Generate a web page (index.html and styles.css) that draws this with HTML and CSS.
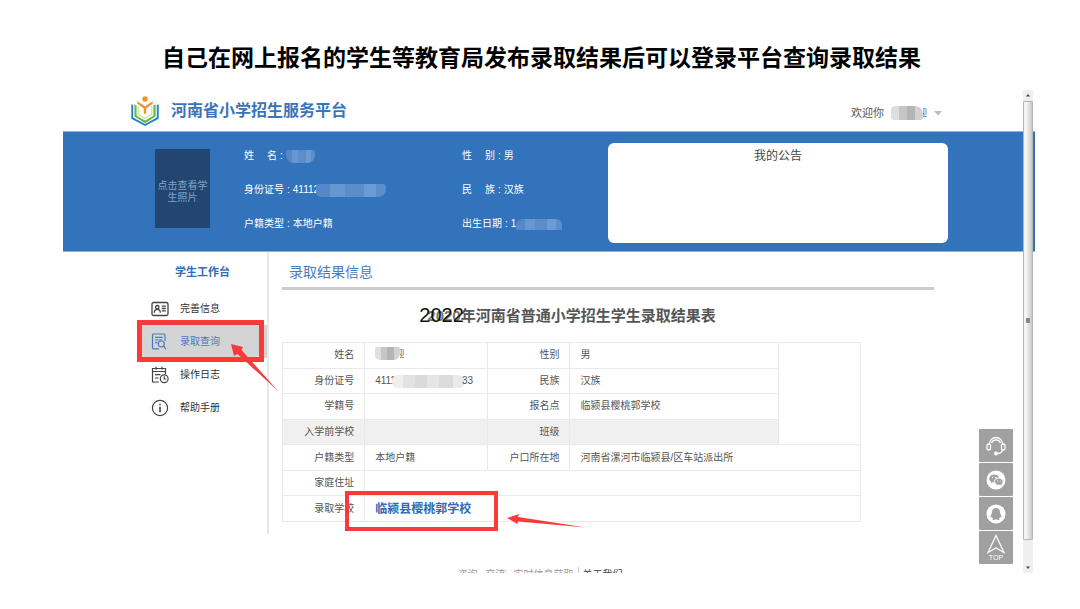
FILE: index.html
```html
<!DOCTYPE html>
<html lang="zh-CN">
<head>
<meta charset="utf-8">
<title>河南省小学招生服务平台</title>
<meta name="viewport" content="width=device-width, initial-scale=1">
<link rel="stylesheet" href="styles.css">
</head>
<body>
<h1 class="headline">自己在网上报名的学生等教育局发布录取结果后可以登录平台查询录取结果</h1>
<div class="window">
  <header class="topbar">
    <svg class="logo" viewBox="0 0 28 30" aria-hidden="true">
      <circle cx="14" cy="3" r="2.700" fill="#ee9233"/>
      <path d="M6.300 5.200 14 10.200l7.700-5v2.600L15.200 12.500v5.300h-2.400v-5.300L6.300 7.800z" fill="#ee9233"/>
      <path d="M3.400 8.200 5.600 9.400v10.300L14 24.600l8.400-4.900V9.400l2.200-1.200v12.300L14 27.300 3.400 20.500z" fill="#6db544"/>
      <path d="M7.200 9.800v8.400L14 22.300l6.800-4.100V9.800" fill="none" stroke="#a9cf5a" stroke-width=".800"/>
      <path d="M.300 8.200 2.200 9v12.600L14 28l11.800-6.400V9l1.900-.800v14.500L14 30 .300 22.700z" fill="#1f86c2"/>
    </svg>
    <strong class="brand">河南省小学招生服务平台</strong>
    <button class="user" type="button">欢迎你
      <span class="masked"><span class="mosaic mosaic-grey mosaic-user"></span><span class="tail">迎</span></span>
      <svg class="caret" viewBox="0 0 8 5" aria-hidden="true"><path d="M0 0h8L4 4.500z" fill="#bdbdbd"/></svg>
    </button>
  </header>

  <section class="band">
    <button class="photo" type="button">点击查看学生照片</button>
    <dl class="profile">
      <div><dt class="pair"><span>姓</span><span>名</span></dt><dd><span class="mosaic mosaic-blue mosaic-name"></span></dd></div>
      <div><dt class="pair"><span>性</span><span>别</span></dt><dd>男</dd></div>
      <div><dt>身份证号</dt><dd>41112<span class="mosaic mosaic-blue mosaic-id"></span></dd></div>
      <div><dt class="pair"><span>民</span><span>族</span></dt><dd>汉族</dd></div>
      <div><dt>户籍类型</dt><dd>本地户籍</dd></div>
      <div><dt>出生日期</dt><dd>1<span class="mosaic mosaic-blue mosaic-birth"></span></dd></div>
    </dl>
    <div class="notice"><h2>我的公告</h2></div>
  </section>

  <div class="body">
    <nav class="sidebar">
      <h2>学生工作台</h2>
      <a class="item" href="#">
        <svg viewBox="0 0 18 18" fill="none" stroke="#444" stroke-width="1.300"><rect x="1" y="2.500" width="16" height="13" rx="1.500"/><circle cx="6.300" cy="7.200" r="1.700"/><path d="M3.300 12.700c0-4.500 6-4.500 6 0M10.800 6.200h4M10.800 8.500h4M10.800 10.800h4"/></svg>
        <span>完善信息</span></a>
      <a class="item active" href="#">
        <svg viewBox="0 0 18 18" fill="none" stroke="#4a7bbd" stroke-width="1.200"><path d="M8 15.800H2.500a1 1 0 0 1-1-1V2a1 1 0 0 1 1-1h10.500a1 1 0 0 1 1 1v6M4 4.300h7.500M4 7h7.500M4 9.700h2.500"/><circle cx="10.300" cy="11" r="3"/><path d="m12.500 13.200 2.500 3"/></svg>
        <span>录取查询</span></a>
      <a class="item" href="#">
        <svg viewBox="0 0 18 18" fill="none" stroke="#444" stroke-width="1.200"><path d="M8 16H1.500V2.500h13V8M1.500 5.500h13M5 .800v3M11 .800v3M4 8.700h5.500M4 12h3.500"/><circle cx="13.200" cy="12.700" r="3.900"/><path d="M13.200 10.300v2.700h2"/></svg>
        <span>操作日志</span></a>
      <a class="item" href="#">
        <svg viewBox="0 0 18 18" fill="none" stroke="#444" stroke-width="1.200"><circle cx="9" cy="9" r="7.600"/><path d="M9 7.700v5.600M9 4.700v1.600" stroke-width="1.600"/></svg>
        <span>帮助手册</span></a>
      <span class="mark mark-menu"></span>
      <svg class="arrow arrow-menu" viewBox="0 0 48 50" aria-hidden="true"><path d="M0 1 12 4 10.500 7 47 48 6.500 11 3 13z" fill="#fa3a3a"/></svg>
    </nav>

    <main class="main">
      <h2 class="section-title">录取结果信息</h2>
      <div class="sheet">
        <h3 class="sheet-title"><span class="year">2020<span class="year-over">2022</span></span>年河南省普通小学招生学生录取结果表</h3>
        <table class="result">
          <colgroup><col class="c-label"><col class="c-value"><col class="c-label"><col class="c-wide"><col class="c-label"></colgroup>
          <tbody>
          <tr><th scope="row">姓名</th><td><span class="masked"><span class="mosaic mosaic-grey mosaic-cell"></span><span class="tail">迎</span></span></td><th scope="row">性别</th><td>男</td><td rowspan="4"></td></tr>
          <tr><th scope="row">身份证号</th><td>4111<span class="mosaic mosaic-pale mosaic-number"></span>33</td><th scope="row">民族</th><td>汉族</td></tr>
          <tr><th scope="row">学籍号</th><td></td><th scope="row">报名点</th><td>临颍县樱桃郭学校</td></tr>
          <tr class="shade"><th scope="row">入学前学校</th><td></td><th scope="row">班级</th><td></td></tr>
          <tr><th scope="row">户籍类型</th><td>本地户籍</td><th scope="row">户口所在地</th><td colspan="2">河南省漯河市临颍县/区车站派出所</td></tr>
          <tr><th scope="row">家庭住址</th><td colspan="4"></td></tr>
          <tr><th scope="row">录取学校</th><td colspan="4" class="school">临颍县樱桃郭学校</td></tr>
          </tbody>
        </table>
        <span class="mark mark-school"></span>
        <svg class="arrow arrow-school" viewBox="0 0 80 14" aria-hidden="true"><path d="M0 4 12 0 11 3 79 13.500 11 7.500 10.500 10z" fill="#fa3a3a"/></svg>
      </div>
    </main>
  </div>

  <footer class="foot"><span>咨询</span><span>交流</span><span>实时信息获取</span><a href="#">关于我们</a></footer>

  <div class="tools">
    <button type="button" aria-label="客服"><svg viewBox="0 0 20 20" fill="none" stroke="#fff" stroke-width="1.300"><path d="M3.500 8a6.500 6.500 0 0 1 13 0M5.500 7a4.800 4.800 0 0 1 9 0M16.500 13c0 3-2 4.500-5 4.500"/><rect x="1" y="8" width="3.500" height="6" rx="1.500"/><rect x="15.500" y="8" width="3.500" height="6" rx="1.500"/><circle cx="10" cy="17.500" r="1.300" fill="#fff"/></svg></button>
    <button type="button" aria-label="微信"><svg viewBox="0 0 20 20"><circle cx="10" cy="10" r="9.500" fill="#fff"/><path d="M8.200 4.500c-3 0-5 1.800-5 4 0 1.300.700 2.400 1.800 3.100l-.400 1.500 1.800-.900 1.800.200c-.300-3.300 2.200-5 4.900-4.900-.500-1.900-2.600-3-4.900-3z" fill="#a0a0a0"/><path d="M12.800 8.300c-2.300 0-4.100 1.500-4.100 3.400s1.800 3.400 4.100 3.400l1.300-.200 1.500.800-.300-1.300c1-.700 1.600-1.600 1.600-2.700 0-1.900-1.800-3.400-4.100-3.400z" fill="#a0a0a0" stroke="#fff" stroke-width=".5"/><g fill="#fff"><circle cx="6.500" cy="7.500" r=".7"/><circle cx="9.800" cy="7.500" r=".7"/><circle cx="11.500" cy="11" r=".6"/><circle cx="14.200" cy="11" r=".6"/></g></svg></button>
    <button type="button" aria-label="QQ"><svg viewBox="0 0 20 20"><circle cx="10" cy="10" r="9.500" fill="#fff"/><path d="M10 4c-2.600 0-4 1.900-4 4.200 0 .700 0 .900-.4 1.600-.700 1.200-1.200 2.600-1 3.700.300.500.900-.1 1.300-.700.200.900.600 1.500 1.100 2-.700.400-.8 1.200.4 1.200 1.100 0 2-.3 2.600-.7.600.4 1.500.7 2.600.7 1.200 0 1.100-.8.400-1.200.5-.5.900-1.100 1.100-2 .4.600 1 1.200 1.300.700.200-1.100-.3-2.500-1-3.700-.4-.7-.4-.9-.4-1.600C14 5.900 12.600 4 10 4z" fill="#a0a0a0"/></svg></button>
    <button type="button" class="to-top"><svg viewBox="0 0 20 20" fill="none" stroke="#fff" stroke-width="1.200"><path d="M10 1.500 18 18.500l-8-4.500-8 4.500z"/></svg><span>TOP</span></button>
  </div>

  <div class="scrollbar" aria-hidden="true">
    <svg viewBox="0 0 10 11"><path d="M3 6.500h4L5 4z" fill="#444"/></svg>
    <span class="thumb"></span>
    <svg class="down" viewBox="0 0 10 11"><path d="M3 4.500h4L5 7z" fill="#444"/></svg>
  </div>
</div>
</body>
</html>
```

FILE: styles.css
```css
* { box-sizing: border-box; }

body {
  margin: 0;
  padding: 42px 45px 36px 63px;
  background: #fff;
  color: #555;
  font: 10px/16px "Liberation Sans", "Noto Sans CJK SC", sans-serif;
}

h1, h2, h3, dl, dt, dd { margin: 0; padding: 0; }
button { border: 0; background: none; font: inherit; color: inherit; padding: 0; }
a { color: inherit; text-decoration: none; }

.headline {
  margin-right: 15px;
  color: #000;
  font-size: 23px;
  line-height: 32px;
  text-align: center;
  white-space: nowrap;
}

.window { position: relative; margin-top: 16px; }

/* Header */
.topbar {
  display: flex;
  align-items: center;
  height: 41px;
  padding: 0 93px 0 68px;
}
.logo { width: 28px; height: 30px; margin-right: 12px; }
.brand { color: #3a74b9; font-size: 16px; line-height: 24px; }
.user {
  display: flex;
  align-items: center;
  gap: 7px;
  margin-left: auto;
  padding-top: 5px;
  font-size: 11px;
}
.caret { width: 8px; height: 5px; }

/* Masked values */
.masked { position: relative; display: inline-flex; align-items: center; }
.tail { width: 4px; overflow: hidden; direction: rtl; font-size: 9px; }
.mosaic { display: inline-block; vertical-align: middle; }
.mosaic-grey { background: linear-gradient(90deg, #dedede 25%, #c6c6c6 25% 50%, #b5b5b5 50% 75%, #d2d2d2 75%); }
.mosaic-pale { background: linear-gradient(90deg, #efefef 15%, #e2e2e2 15% 32%, #dadada 32% 48%, #e6e6e6 48% 65%, #dcdcdc 65% 84%, #ebebeb 84%); }
.mosaic-blue { background: linear-gradient(90deg, #5588c8 20%, #6796d0 20% 42%, #5a8dca 42% 68%, #6b9bd4 68% 86%, #5b8fcc 86%); }
.mosaic-user { width: 32px; height: 14px; border-radius: 4px 8px 3px 3px; }
.mosaic-name { width: 29px; height: 13px; border-radius: 2px 3px 8px 8px; }
.mosaic-id { width: 70px; height: 13px; margin-left: -3px; border-radius: 3px 4px 8px 5px; }
.mosaic-birth { width: 46px; height: 11px; border-radius: 6px 6px 1px 1px; }
.mosaic-cell { width: 25px; height: 13px; border-radius: 2px 2px 7px 5px; }
.mosaic-number { width: 73px; height: 13px; margin: 0 -3px 0 -4px; border-radius: 6px; }

/* Student band */
.band {
  display: flex;
  align-items: flex-start;
  height: 121px;
  padding: 11px 87px 9px 92px;
  border: solid #8fb4df;
  border-width: 1px 0;
  background: #3273bb;
  color: #fff;
}
.photo {
  width: 55px;
  height: 79px;
  margin-top: 6px;
  padding: 6px 2px 0;
  background: #22466f;
  color: #7fa3cc;
  line-height: 12px;
}
.profile {
  flex: 1;
  display: grid;
  grid-template-columns: 218px 1fr;
  margin: -4px 0 0 34px;
  line-height: 34px;
}
.profile div { display: flex; height: 34px; white-space: nowrap; }
.profile dt::after { content: ":"; margin: 0 3px; }
.pair { display: flex; }
.pair span:first-child { width: 23px; }
.notice {
  width: 340px;
  height: 100px;
  padding-top: 4px;
  border-radius: 6px;
  background: #fff;
  color: #444;
  text-align: center;
}
.notice h2 { font-size: 12px; font-weight: 400; line-height: 18px; }

/* Body */
.body { display: flex; padding: 0 101px 0 75px; }
.sidebar {
  position: relative;
  flex: none;
  width: 131px;
  min-height: 282px;
  padding-top: 12px;
  border-right: 2px solid #e8e8e8;
}
.sidebar h2 {
  margin-bottom: 12px;
  color: #2f6cb5;
  font-size: 11px;
  line-height: 16px;
  text-align: center;
}
.item {
  display: flex;
  align-items: center;
  gap: 11px;
  height: 33px;
  padding-left: 13px;
  color: #333;
}
.item svg { width: 18px; height: 18px; }
.active { background: #d4d4d4; color: #4a7bbd; }

.main { flex: 1; padding-left: 13px; }
.section-title {
  padding: 10px 7px 5px;
  border-bottom: 3px solid #ccc;
  color: #4a7bbd;
  font-size: 14px;
  font-weight: 400;
  line-height: 20px;
}
.sheet { position: relative; max-width: 579px; }
.sheet-title {
  padding: 16px 0;
  font-size: 15px;
  line-height: 20px;
  text-align: center;
}
.year { position: relative; color: #777; }
.year-over {
  position: absolute;
  left: -8px;
  top: -2px;
  color: #111;
  font-size: 20px;
  font-weight: 400;
}

.result {
  width: 100%;
  height: 180px;
  border-collapse: collapse;
  table-layout: fixed;
}
.c-label { width: 82px; }
.c-value { width: 123px; }
.c-wide { width: 208px; }
.result th, .result td {
  height: 25px;
  padding: 0 10px;
  border: 1px solid #e9e9e9;
  font-weight: 400;
  line-height: 16px;
  text-align: left;
  white-space: nowrap;
}
.result th { text-align: right; }
.result .shade { background: #f0f0f0; }
.result td[rowspan] { background: #fff; }
.result .school { color: #2f6cb5; font-size: 12px; font-weight: 700; }

/* Red annotations */
.mark { position: absolute; border: 5px solid #fa3a3a; pointer-events: none; }
.mark-menu { left: -1px; top: 68px; width: 127px; height: 42px; }
.mark-school { left: 63px; bottom: -9px; width: 153px; height: 40px; border-width: 4px; }
.arrow { position: absolute; pointer-events: none; }
.arrow-menu { left: 93px; top: 91px; width: 48px; height: 50px; }
.arrow-school { left: 225px; bottom: -6px; width: 80px; height: 14px; }

/* Footer, cut off by the window edge */
.foot {
  display: flex;
  justify-content: center;
  height: 6px;
  margin-top: 33px;
  padding-right: 18px;
  overflow: hidden;
  color: #999;
  line-height: 16px;
}
.foot span { margin-right: 8px; }
.foot span:nth-child(3) { margin-right: 4px; }
.foot a { padding-left: 4px; border-left: 1px solid #ccc; color: #444; }

/* Floating tools */
.tools {
  position: absolute;
  right: 22px;
  bottom: 9px;
  display: grid;
  gap: 1px;
}
.tools button {
  display: flex;
  flex-direction: column;
  align-items: center;
  justify-content: center;
  width: 34px;
  height: 33px;
  border-radius: 1px;
  background: #a0a0a0;
  color: #fff;
}
.tools svg { width: 20px; height: 20px; }
.tools .to-top span { font-size: 7px; line-height: 7px; }

/* Scroll bar */
.scrollbar {
  position: absolute;
  top: 0;
  right: 2px;
  bottom: 0;
  display: flex;
  flex-direction: column;
  width: 10px;
  background: #efefef;
}
.scrollbar svg { width: 10px; height: 11px; }
.thumb {
  flex: 1;
  margin-bottom: 22px;
  border: 1px solid #b5b5b5;
  border-radius: 1px;
  background:
    linear-gradient(#888, #888) center / 4px 5px no-repeat,
    linear-gradient(90deg, #f5f5f5 30%, #c8c8c8);
}
```
